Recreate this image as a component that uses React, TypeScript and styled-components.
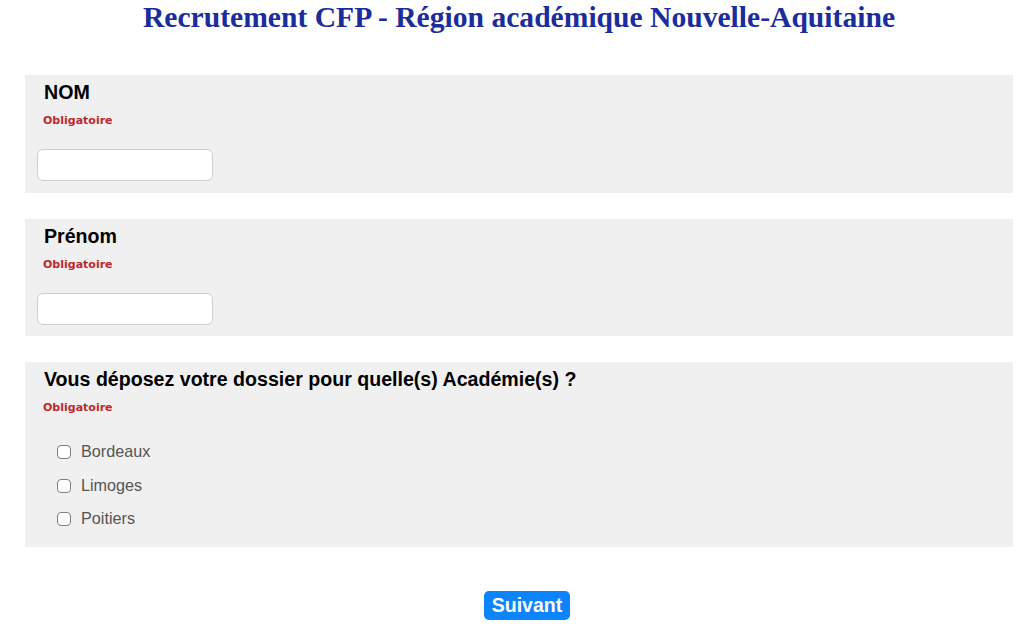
import React from "react";
import styled, { createGlobalStyle } from "styled-components";

const Global = createGlobalStyle`
  body {
    margin: 0;
    background: #fff;
    font-family: "Liberation Sans", Arial, sans-serif;
  }
`;

const Page = styled.div`
  display: flex;
  flex-direction: column;
  padding: 0 11px 0 25px;
`;

const Title = styled.h1`
  margin: 0;
  padding-top: 1px;
  height: 75px;
  box-sizing: border-box;
  text-align: center;
  font-family: "Liberation Serif", "Times New Roman", serif;
  font-weight: bold;
  font-size: 29.6px;
  line-height: 32px;
  color: #1b2c9c;
`;

const Panel = styled.section<{ $h: number }>`
  background: #f0f0f0;
  height: ${(p) => p.$h}px;
  box-sizing: border-box;
  padding: 6px 12px 0 12px;
  margin-bottom: 26px;
  display: flex;
  flex-direction: column;
`;

const Label = styled.div`
  padding-left: 7px;
  font-weight: bold;
  font-size: 19.6px;
  line-height: 22px;
  color: #000;
`;

const Required = styled.div`
  padding-left: 6px;
  margin-top: 11px;
  font-family: "DejaVu Sans", Verdana, sans-serif;
  font-weight: bold;
  font-size: 11px;
  line-height: 14px;
  color: #c0282d;
`;

const TextInput = styled.input`
  margin-top: 21px;
  width: 176px;
  height: 32px;
  box-sizing: border-box;
  background: #fff;
  border: 1px solid #cfcfcf;
  border-radius: 6px;
  outline: none;
`;

const Options = styled.div`
  margin-top: 26px;
  padding-left: 20px;
  display: flex;
  flex-direction: column;
  gap: 13.5px;
`;

const Option = styled.label`
  display: flex;
  align-items: center;
  gap: 10px;
  font-size: 16.2px;
  line-height: 20px;
  color: #555;
`;

const Box = styled.span`
  width: 12px;
  height: 12px;
  border: 1px solid #808080;
  border-radius: 4px;
  background: #fff;
  margin-top: 2px;
`;

const Footer = styled.div`
  display: flex;
  justify-content: center;
  padding: 18px 0 0 16px;
`;

const Button = styled.button`
  height: 29px;
  padding: 0 8px;
  border: none;
  border-radius: 5px;
  background: #0b84fe;
  color: #fff;
  font-family: "Liberation Sans", Arial, sans-serif;
  font-weight: bold;
  font-size: 19.5px;
  line-height: 29px;
`;

const academies = ["Bordeaux", "Limoges", "Poitiers"];

const App = () => (
  <Page>
    <Global />
    <Title>Recrutement CFP - Région académique Nouvelle-Aquitaine</Title>
    <Panel $h={118}>
      <Label>NOM</Label>
      <Required>Obligatoire</Required>
      <TextInput />
    </Panel>
    <Panel $h={117}>
      <Label>Prénom</Label>
      <Required>Obligatoire</Required>
      <TextInput />
    </Panel>
    <Panel $h={185}>
      <Label>Vous déposez votre dossier pour quelle(s) Académie(s) ?</Label>
      <Required>Obligatoire</Required>
      <Options>
        {academies.map((a) => (
          <Option key={a}>
            <Box />
            {a}
          </Option>
        ))}
      </Options>
    </Panel>
    <Footer>
      <Button>Suivant</Button>
    </Footer>
  </Page>
);

export default App;
